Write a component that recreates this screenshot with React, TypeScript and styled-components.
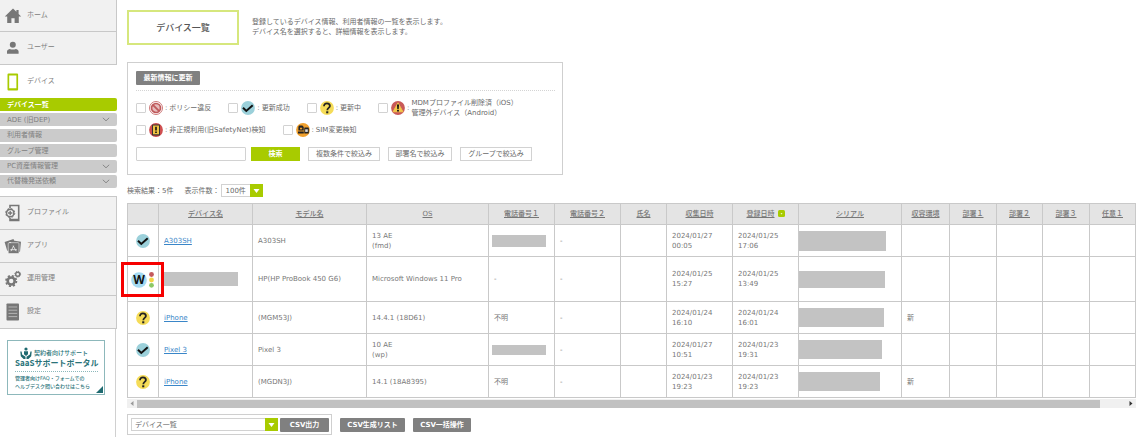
import React from "react";
import styled, { createGlobalStyle, css } from "styled-components";

const GlobalStyle = createGlobalStyle`
  *, *::before, *::after { box-sizing: border-box; }
  html, body, #root { height: 100%; }
  body {
    margin: 0;
    background: #fff;
    color: #6a6a6a;
    font-family: "DejaVu Sans", "Noto Sans CJK JP", sans-serif;
    font-size: 7px;
    line-height: 10px;
  }
  button, input, select { font: inherit; color: inherit; margin: 0; border-radius: 0; }
  p, h1, ul { margin: 0; padding: 0; }
`;

const Page = styled.div`
  display: grid;
  grid-template-columns: 117px minmax(0, 1fr);
  min-height: 100vh;
`;

/* ---------- Sidebar ---------- */

const Sidebar = styled.nav`
  display: flex;
  flex-direction: column;
`;

const NavGroup = styled.div<{ $topLine?: boolean }>`
  border-right: 1px solid #c8c8c8;
  border-top: ${(p) => (p.$topLine ? "1px solid #c8c8c8" : "0")};
  background: #f1f1f1;
`;

const NavLink = styled.a<{ $plain?: boolean; $short?: boolean }>`
  display: grid;
  grid-template-columns: 27px 1fr;
  align-items: center;
  height: ${(p) => (p.$short ? 32 : 33)}px;
  color: #808080;
  text-decoration: none;
  border-bottom: ${(p) => (p.$plain ? "0" : "1px solid #c8c8c8")};

  svg { display: block; margin-left: 4px; }
  span { padding-bottom: 2px; }
`;

const SubList = styled.ul`
  display: flex;
  flex-direction: column;
  justify-content: space-between;
  min-height: 90px;
  margin-bottom: 8px;
  list-style: none;
`;

const SubLink = styled.a<{ $active?: boolean }>`
  display: flex;
  align-items: center;
  justify-content: space-between;
  height: 13px;
  padding: 0 7px;
  border-radius: 0 2px 2px 0;
  text-decoration: none;
  background: ${(p) => (p.$active ? "#a8cb00" : "#cbcbcb")};
  color: ${(p) => (p.$active ? "#fff" : "#808080")};
  font-weight: ${(p) => (p.$active ? 700 : 400)};
`;

const SidebarRest = styled.div`
  flex: 1;
  width: 116px;
  padding: 11px 10px 0 7px;
  border-right: 1px solid #d0d0d0;
`;

const Banner = styled.a`
  display: block;
  position: relative;
  height: 55px;
  padding: 6px 0 0 7px;
  border: 1px solid #8db8bb;
  color: #2a7379;
  text-decoration: none;
  white-space: nowrap;
`;

const BannerTop = styled.span`
  display: flex;
  align-items: center;
  gap: 2px;
  height: 11px;
  padding-left: 5px;
  font-size: 6px;
  font-weight: 500;
`;

const BannerTitle = styled.strong`
  display: block;
  margin-right: 6px;
  padding-bottom: 3px;
  border-bottom: 1px dotted #8db8bb;
  font-family: "Noto Sans CJK JP", sans-serif;
  font-size: 8px;
  line-height: 10px;
`;

const BannerNote = styled.span`
  display: block;
  padding-top: 2px;
  font-size: 5px;
  font-weight: 500;
  line-height: 8px;
`;

const BannerCorner = styled.svg`
  position: absolute;
  right: 1px;
  bottom: 1px;
`;

/* ---------- Main ---------- */

const Main = styled.main`
  min-width: 0;
  padding: 10px 9px 0 10px;
`;

const Heading = styled.header`
  display: flex;
  align-items: flex-start;
  gap: 13px;
  margin-bottom: 17px;
`;

const Title = styled.h1`
  display: flex;
  align-items: center;
  justify-content: center;
  width: 112px;
  height: 35px;
  border: 2px solid #d6e77d;
  font-size: 9px;
  font-weight: 500;
  color: #555;
`;

const Lead = styled.p`
  padding-top: 7px;
`;

const Panel = styled.section`
  max-width: 436px;
  padding: 8px 7px 13px 8px;
  border: 1px solid #cfcfcf;
`;

const DarkButton = styled.button`
  height: 14px;
  padding: 0;
  border: 0;
  border-radius: 1px;
  background: #808080;
  color: #fff;
  font-weight: 700;
  line-height: 10px;
  white-space: nowrap;
`;

const RefreshButton = styled(DarkButton)`
  display: block;
  width: 64px;
`;

const Filters = styled.div`
  margin-top: 5px;
  padding-top: 6px;
  border-top: 1px dotted #d4d4d4;
`;

const FilterRow = styled.div`
  display: flex;
  align-items: center;
  gap: 17px;
  height: 22px;
`;

const FilterLabel = styled.label`
  display: flex;
  align-items: center;
  gap: 2px;
  white-space: nowrap;

  svg { display: block; margin-left: 1px; }
`;

const CheckBox = styled.input`
  appearance: none;
  width: 10px;
  height: 10px;
  border: 1px solid #d2d2d2;
  border-radius: 1px;
  background: #fff;
`;

const SearchRow = styled.div`
  display: flex;
  align-items: center;
  gap: 8px;
  margin-top: 6px;
`;

const SearchGroup = styled.form`
  display: flex;
  gap: 5px;
`;

const SearchInput = styled.input`
  width: 110px;
  height: 14px;
  padding: 0 4px;
  border: 1px solid #d2d2d2;
  border-radius: 1px;
`;

const SearchButton = styled.button`
  width: 49px;
  height: 14px;
  padding: 0;
  border: 0;
  background: #a8cb00;
  color: #fff;
  font-weight: 700;
  line-height: 10px;
`;

const OutlineButton = styled.button<{ $wide?: boolean }>`
  width: ${(p) => (p.$wide ? 72 : 64)}px;
  height: 14px;
  padding: 0;
  border: 1px solid #d2d2d2;
  background: #fff;
  line-height: 10px;
  white-space: nowrap;
`;

const ResultBar = styled.div`
  display: flex;
  align-items: center;
  gap: 11px;
  margin: 9px 0 6px;

  label { display: flex; align-items: center; gap: 2px; }
`;

const SelectBox = styled.span<{ $wide?: boolean }>`
  display: inline-grid;
  width: ${(p) => (p.$wide ? 147 : 42)}px;
  height: 13px;

  select {
    grid-area: 1 / 1;
    width: 100%;
    height: 13px;
    padding: 0 14px 0 3px;
    appearance: none;
    border: 1px solid #d2d2d2;
    background: #fff;
    line-height: 10px;
  }
  svg { grid-area: 1 / 1; justify-self: end; pointer-events: none; }
`;

const Table = styled.table`
  width: 100%;
  table-layout: fixed;
  border-collapse: collapse;
  color: #777;
`;

const cell = css`
  border: 1px solid #c9c9c9;
  overflow-wrap: anywhere;
`;

const Th = styled.th`
  ${cell}
  height: 21px;
  padding: 0;
  background: #e4e4e4;
  font-weight: 500;
  white-space: nowrap;

  a { color: #777; text-decoration: underline; }
  svg { vertical-align: -1px; margin-left: 3px; }
`;

const Td = styled.td<{ $inset?: number }>`
  ${cell}
  padding: 0 0 0 ${(p) => p.$inset ?? 5}px;
`;

const StatusTd = styled.td`
  ${cell}
  padding: 0;

  > svg { display: block; margin: 0 auto; }
`;

const Tr = styled.tr<{ $tall?: boolean }>`
  height: ${(p) => (p.$tall ? 45 : 32)}px;
`;

const DeviceLink = styled.a`
  color: #3a86c8;
`;

const Redacted = styled.span<{ $w: number; $h: number }>`
  display: block;
  width: ${(p) => p.$w}px;
  max-width: 100%;
  height: ${(p) => p.$h}px;
  background: #c3c3c3;
`;

const Marked = styled.div`
  position: relative;
  display: flex;
  justify-content: flex-end;
  align-items: center;
  gap: 2px;
  padding: 2px 4px 0 0;

  &::after {
    content: "";
    position: absolute;
    left: -7px;
    right: -6px;
    top: -8px;
    bottom: -9px;
    border: 3px solid #f60000;
  }
`;

const ScrollTrack = styled.div`
  display: grid;
  grid-template-columns: 10px 1fr 36px;
  align-items: center;
  height: 9px;
  margin-top: 1px;
  background: #f0f0f0;

  svg { display: block; }
  svg:first-child { margin-left: 3px; }
  svg:last-child { justify-self: end; margin-right: 3px; }
`;

const ScrollThumb = styled.span`
  height: 8px;
  background: #c1c1c1;
`;

const ExportBar = styled.div`
  display: flex;
  align-items: center;
  gap: 8px;
  margin-top: 6px;
`;

const ExportBox = styled.div`
  display: flex;
  align-items: center;
  gap: 2px;
  height: 21px;
  padding: 0 2px 0 3px;
  border: 1px solid #cfcfcf;
`;

const ExportButton = styled(DarkButton)<{ $w: number }>`
  width: ${(p) => p.$w}px;
`;

/* ---------- Icons ---------- */

const HomeIcon = () => (
  <svg width="18" height="18" viewBox="0 0 18 18" fill="#777">
    <path d="M9 1.600.8 9.400h2.400V16h4.200v-4.800h3.200V16h4.200V9.400h2.400L14.600 7V3h-2.200v1.800z" />
  </svg>
);
const UserIcon = () => (
  <svg width="18" height="18" viewBox="0 0 18 18" fill="#777">
    <circle cx="8.800" cy="5.700" r="3" />
    <path d="M3 14.800v-2.200c0-1.500.9-2.300 2.600-2.700q3.200 1 6.400 0c1.700.4 2.600 1.200 2.600 2.700v2.200z" />
  </svg>
);
const PhoneIcon = () => (
  <svg width="18" height="18" viewBox="0 0 18 18">
    <path fill="#a8cb00" fillRule="evenodd" d="M4.500.5h8.600a1 1 0 0 1 1 1v15a1 1 0 0 1-1 1H4.500a1 1 0 0 1-1-1v-15a1 1 0 0 1 1-1zm.7 2v12.800h7.200V2.500z" />
  </svg>
);
const ProfileIcon = () => (
  <svg width="18" height="18" viewBox="0 0 18 18" fill="none" stroke="#777">
    <path strokeWidth="1.600" d="M6 4V1.500h8.700v15H6V14" />
    <path strokeWidth="1.500" d="M6 15.500h8.700" />
    <circle cx="6.200" cy="9" r="3.700" fill="#f1f1f1" strokeWidth="1.500" />
    <circle cx="6.200" cy="9" r="4.600" strokeDasharray="1.800 1.813" strokeWidth=".9" />
    <path strokeWidth="1.300" d="M6.200 6.800v4.400M4 9h4.400" />
  </svg>
);
const AppIcon = () => (
  <svg width="18" height="18" viewBox="0 0 18 18" fill="#777">
    <path d="M.6 5 9.500 2l1 3H5.200L4.600 13.500l-1.400.2z" />
    <path d="m7.500 3.200 9.500 1.600-1 10-2 .3V6H7z" />
    <rect x="4.200" y="5.700" width="10.800" height="10.800" rx="1" stroke="#f1f1f1" strokeWidth=".6" />
    <path d="M9.700 8.700 7 14.200M9.100 8.700l3.100 5.500M6.300 12.700h6.600" fill="none" stroke="#f1f1f1" strokeWidth=".8" />
  </svg>
);
const GearIcon = () => (
  <svg width="18" height="18" viewBox="0 0 18 18" fill="none" stroke="#777">
    <circle cx="7.200" cy="11" r="3.500" strokeWidth="2.600" />
    <circle cx="7.200" cy="11" r="5.200" strokeWidth="1.800" strokeDasharray="2.100 1.984" />
    <circle cx="13.700" cy="4.200" r="2" strokeWidth="1.400" />
    <circle cx="13.700" cy="4.200" r="2.900" strokeWidth="1" strokeDasharray="1.300 .978" />
  </svg>
);
const SettingsIcon = () => (
  <svg width="18" height="18" viewBox="0 0 18 18">
    <rect x="2.500" y=".5" width="12.500" height="17" rx=".8" fill="#777" />
    <path d="M4.500 4h8.700M4.500 7.200h8.700M4.500 10.400h8.700M4.500 13.600h8.700" stroke="#c4c4c4" strokeWidth=".8" />
  </svg>
);
const Chevron = () => (
  <svg width="8" height="5" viewBox="0 0 8 5" fill="none" stroke="#888">
    <path d="m.8.8 3.200 3 3.200-3" />
  </svg>
);
const HandsIcon = () => (
  <svg width="12" height="12" viewBox="0 0 12 12" fill="#1f6a70">
    <circle cx="6" cy="2" r="1.600" />
    <path d="M4 4.200h4v3L6 9 4 7.200z" />
    <path d="M.3 4.500h1.300l.5 3 3.400 2.300V12H3.600L.8 9.200zM11.700 4.500h-1.300l-.5 3-3.400 2.300V12h1.900l2.800-2.800z" />
  </svg>
);
const DownArrow = () => (
  <svg width="13" height="13" viewBox="0 0 13 13">
    <rect width="13" height="13" fill="#a8cb00" />
    <path d="M3.500 5h6l-3 4z" fill="#fff" />
  </svg>
);
const SortIcon = () => (
  <svg width="7" height="7" viewBox="0 0 7 7">
    <rect width="7" height="7" rx="1.500" fill="#a8cb00" />
    <path d="M2.500 3.200h2L3.500 4.600z" fill="#fff" />
  </svg>
);
const CheckIcon = () => (
  <svg width="14" height="14" viewBox="0 0 14 14">
    <circle cx="7" cy="7" r="6.900" fill="#9bd0da" />
    <path d="m2 6.800 3.300 3.200 6.400-5.800" fill="none" stroke="#111" strokeWidth="2" />
  </svg>
);
const QuestionIcon = () => (
  <svg width="14" height="14" viewBox="0 0 14 14">
    <circle cx="7" cy="7" r="6.900" fill="#f5dc58" />
    <path d="M4 5.200c0-1.700 1.200-2.800 2.900-2.800s3 1 3 2.600c0 1.900-2.600 2-2.600 4.200" fill="none" stroke="#222" strokeWidth="1.800" />
    <rect x="6.200" y="10.300" width="2.100" height="2" fill="#222" />
  </svg>
);
const BanIcon = () => (
  <svg width="14" height="14" viewBox="0 0 14 14">
    <circle cx="7" cy="7" r="6.500" fill="#fff" stroke="#c86a6a" strokeWidth=".9" />
    <circle cx="7" cy="7" r="4.500" fill="#e6bcbc" stroke="#bf5a5c" strokeWidth="1.700" />
    <path d="m3.800 3.800 6.400 6.400" stroke="#bf5a5c" strokeWidth="1.900" />
  </svg>
);
const WarningIcon = () => (
  <svg width="14" height="14" viewBox="0 0 14 14">
    <circle cx="7" cy="7" r="6.900" fill="#c95a58" />
    <path d="m7 1.800 5 9H2z" fill="#f3c94a" stroke="#f3c94a" strokeWidth=".8" />
    <path d="M6 3.600h2l-.3 4.600H6.300zM6.100 9h1.800v1.600H6.100z" fill="#111" />
  </svg>
);
const DeviceAlertIcon = () => (
  <svg width="14" height="14" viewBox="0 0 14 14">
    <circle cx="7" cy="7" r="6.900" fill="#cf4f50" />
    <rect x="3" y="1.500" width="8" height="11" rx="1" fill="#333" />
    <rect x="4" y="2.500" width="6" height="8.800" fill="#efc343" />
    <path d="M6.200 3.700h1.600v3.700H6.200zM6.200 8.400h1.600V10H6.200z" fill="#111" />
  </svg>
);
const SimIcon = () => (
  <svg width="14" height="14" viewBox="0 0 14 14">
    <circle cx="7" cy="7" r="6.900" fill="#f0a02e" />
    <path d="M3.200 2.600h3.200l1.300 1.400v3.500H2.400V3.800z" fill="#222" />
    <rect x="2" y="8.500" width="5.800" height="2" fill="#222" />
    <rect x="8.300" y="4.500" width="4.500" height="6" rx=".6" fill="#222" />
    <rect x="9.200" y="6.300" width="2.600" height="2.600" fill="#ddd" />
    <rect x="4" y="4.700" width="2.200" height="1.700" fill="#f0a02e" />
  </svg>
);
const WindowsStatusIcon = () => (
  <svg width="16" height="16" viewBox="0 0 16 16">
    <circle cx="8" cy="8" r="7.800" fill="#a4daf2" />
    <text x="8" y="12" textAnchor="middle" fontFamily="Open Sans, sans-serif" fontWeight="700" fontSize="12" fill="#111">
      W
    </text>
  </svg>
);
const SignalIcon = () => (
  <svg width="5" height="16" viewBox="0 0 5 16">
    <circle cx="2.500" cy="2.500" r="2.400" fill="#c4595c" />
    <circle cx="2.500" cy="8" r="2.400" fill="#f4d447" />
    <circle cx="2.500" cy="13.300" r="2.400" fill="#8cc865" />
  </svg>
);

/* ---------- Data ---------- */

const subMenu = [
  { label: "デバイス一覧", active: true },
  { label: "ADE (旧DEP)", open: true },
  { label: "利用者情報" },
  { label: "グループ管理" },
  { label: "PC資産情報管理", open: true },
  { label: "代替機発送依頼", open: true },
];

const columns: { label: string; width: number; sorted?: boolean }[] = [
  { label: "", width: 31 },
  { label: "デバイス名", width: 94 },
  { label: "モデル名", width: 114 },
  { label: "OS", width: 122 },
  { label: "電話番号１", width: 66 },
  { label: "電話番号２", width: 66 },
  { label: "氏名", width: 46 },
  { label: "収集日時", width: 66 },
  { label: "登録日時", width: 66, sorted: true },
  { label: "シリアル", width: 103 },
  { label: "収容環境", width: 48 },
  { label: "部署１", width: 47 },
  { label: "部署２", width: 46 },
  { label: "部署３", width: 47 },
  { label: "任意１", width: 46 },
];

type Device = {
  status: "ok" | "pending" | "windows";
  name?: string;
  model: string;
  os: string[];
  phone?: string;
  phoneHeight?: number;
  collected: string[];
  registered: string[];
  serial: [number, number];
  env?: string;
};

const devices: Device[] = [
  { status: "ok", name: "A303SH", model: "A303SH", os: ["13 AE", "(fmd)"], phoneHeight: 12, collected: ["2024/01/27", "00:05"], registered: ["2024/01/25", "17:06"], serial: [87, 20] },
  { status: "windows", model: "HP(HP ProBook 450 G6)", os: ["Microsoft Windows 11 Pro"], phone: "-", collected: ["2024/01/25", "15:27"], registered: ["2024/01/25", "13:49"], serial: [86, 17] },
  { status: "pending", name: "iPhone", model: "(MGM53J)", os: ["14.4.1 (18D61)"], phone: "不明", collected: ["2024/01/24", "16:10"], registered: ["2024/01/24", "16:01"], serial: [85, 19], env: "新" },
  { status: "ok", name: "Pixel 3", model: "Pixel 3", os: ["10 AE", "(wp)"], phoneHeight: 10, collected: ["2024/01/27", "10:51"], registered: ["2024/01/23", "19:31"], serial: [83, 19] },
  { status: "pending", name: "iPhone", model: "(MGDN3J)", os: ["14.1 (18A8395)"], phone: "不明", collected: ["2024/01/23", "19:23"], registered: ["2024/01/23", "19:23"], serial: [81, 19], env: "新" },
];

const Lines = ({ items }: { items: string[] }) => (
  <>
    {items.map((text) => (
      <div key={text}>{text}</div>
    ))}
  </>
);

const Filter = ({ icon, children }: { icon: React.ReactNode; children: React.ReactNode }) => (
  <FilterLabel>
    <CheckBox type="checkbox" />
    {icon}
    <span>:</span>
    <span>{children}</span>
  </FilterLabel>
);

const NavItem = ({ icon, label, plain, short }: { icon: React.ReactNode; label: string; plain?: boolean; short?: boolean }) => (
  <NavLink href="#" $plain={plain} $short={short}>
    {icon}
    <span>{label}</span>
  </NavLink>
);

export default function App() {
  return (
    <>
      <GlobalStyle />
      <Page lang="ja">
        <Sidebar>
          <NavGroup>
            <NavItem icon={<HomeIcon />} label="ホーム" short />
            <NavItem icon={<UserIcon />} label="ユーザー" />
          </NavGroup>
          <NavItem icon={<PhoneIcon />} label="デバイス" plain />
          <SubList>
            {subMenu.map((item) => (
              <li key={item.label}>
                <SubLink href="#" $active={item.active}>
                  {item.label}
                  {item.open && <Chevron />}
                </SubLink>
              </li>
            ))}
          </SubList>
          <NavGroup $topLine>
            <NavItem icon={<ProfileIcon />} label="プロファイル" />
            <NavItem icon={<AppIcon />} label="アプリ" />
            <NavItem icon={<GearIcon />} label="運用管理" />
            <NavItem icon={<SettingsIcon />} label="設定" />
          </NavGroup>
          <SidebarRest>
            <Banner href="#">
              <BannerTop>
                <HandsIcon />
                契約者向けサポート
              </BannerTop>
              <BannerTitle>SaaSサポートポータル</BannerTitle>
              <BannerNote>
                管理者向けFAQ・フォームでの
                <br />
                ヘルプデスク問い合わせはこちら
              </BannerNote>
              <BannerCorner width="7" height="7" viewBox="0 0 7 7">
                <path d="M7 0v7H0z" fill="#1f6a70" />
              </BannerCorner>
            </Banner>
          </SidebarRest>
        </Sidebar>

        <Main>
          <Heading>
            <Title>デバイス一覧</Title>
            <Lead>
              登録しているデバイス情報、利用者情報の一覧を表示します。
              <br />
              デバイス名を選択すると、詳細情報を表示します。
            </Lead>
          </Heading>

          <Panel>
            <RefreshButton type="button">最新情報に更新</RefreshButton>
            <Filters>
              <FilterRow>
                <Filter icon={<BanIcon />}>ポリシー違反</Filter>
                <Filter icon={<CheckIcon />}>更新成功</Filter>
                <Filter icon={<QuestionIcon />}>更新中</Filter>
                <Filter icon={<WarningIcon />}>
                  MDMプロファイル削除済（iOS）
                  <br />
                  管理外デバイス（Android）
                </Filter>
              </FilterRow>
              <FilterRow>
                <Filter icon={<DeviceAlertIcon />}>非正規利用(旧SafetyNet)検知</Filter>
                <Filter icon={<SimIcon />}>SIM変更検知</Filter>
              </FilterRow>
              <SearchRow>
                <SearchGroup onSubmit={(e) => e.preventDefault()}>
                  <SearchInput type="text" aria-label="検索" />
                  <SearchButton type="submit">検索</SearchButton>
                </SearchGroup>
                <OutlineButton type="button" $wide>複数条件で絞込み</OutlineButton>
                <OutlineButton type="button">部署名で絞込み</OutlineButton>
                <OutlineButton type="button" $wide>グループで絞込み</OutlineButton>
              </SearchRow>
            </Filters>
          </Panel>

          <ResultBar>
            <span>検索結果：5件</span>
            <label>
              表示件数：
              <SelectBox>
                <select defaultValue="100">
                  <option value="100">100件</option>
                </select>
                <DownArrow />
              </SelectBox>
            </label>
          </ResultBar>

          <Table>
            <colgroup>
              {columns.map((c, i) => (
                <col key={i} width={c.width} />
              ))}
            </colgroup>
            <thead>
              <tr>
                {columns.map((c, i) => (
                  <Th key={i} scope="col">
                    {c.label && <a href="#">{c.label}</a>}
                    {c.sorted && <SortIcon />}
                  </Th>
                ))}
              </tr>
            </thead>
            <tbody>
              {devices.map((d, i) => (
                <Tr key={i} $tall={d.status === "windows"}>
                  <StatusTd>
                    {d.status === "ok" && <CheckIcon />}
                    {d.status === "pending" && <QuestionIcon />}
                    {d.status === "windows" && (
                      <Marked>
                        <WindowsStatusIcon />
                        <SignalIcon />
                      </Marked>
                    )}
                  </StatusTd>
                  <Td>{d.name ? <DeviceLink href="#">{d.name}</DeviceLink> : <Redacted $w={74} $h={14} />}</Td>
                  <Td>{d.model}</Td>
                  <Td><Lines items={d.os} /></Td>
                  {d.phone ? <Td>{d.phone}</Td> : <Td $inset={3}><Redacted $w={54} $h={d.phoneHeight ?? 12} /></Td>}
                  <Td>-</Td>
                  <Td />
                  <Td><Lines items={d.collected} /></Td>
                  <Td><Lines items={d.registered} /></Td>
                  <Td $inset={0}><Redacted $w={d.serial[0]} $h={d.serial[1]} /></Td>
                  <Td>{d.env}</Td>
                  <Td />
                  <Td />
                  <Td />
                  <Td />
                </Tr>
              ))}
            </tbody>
          </Table>
          <ScrollTrack>
            <svg width="4" height="5" viewBox="0 0 4 5"><path d="M3.500 0v5L.5 2.500z" fill="#999" /></svg>
            <ScrollThumb />
            <svg width="4" height="5" viewBox="0 0 4 5"><path d="M.5 0v5l3-2.500z" fill="#333" /></svg>
          </ScrollTrack>

          <ExportBar>
            <ExportBox>
              <SelectBox $wide>
                <select aria-label="出力対象" defaultValue="devices">
                  <option value="devices">デバイス一覧</option>
                </select>
                <DownArrow />
              </SelectBox>
              <ExportButton type="button" $w={49}>CSV出力</ExportButton>
            </ExportBox>
            <ExportButton type="button" $w={65}>CSV生成リスト</ExportButton>
            <ExportButton type="button" $w={58}>CSV一括操作</ExportButton>
          </ExportBar>
        </Main>
      </Page>
    </>
  );
}
